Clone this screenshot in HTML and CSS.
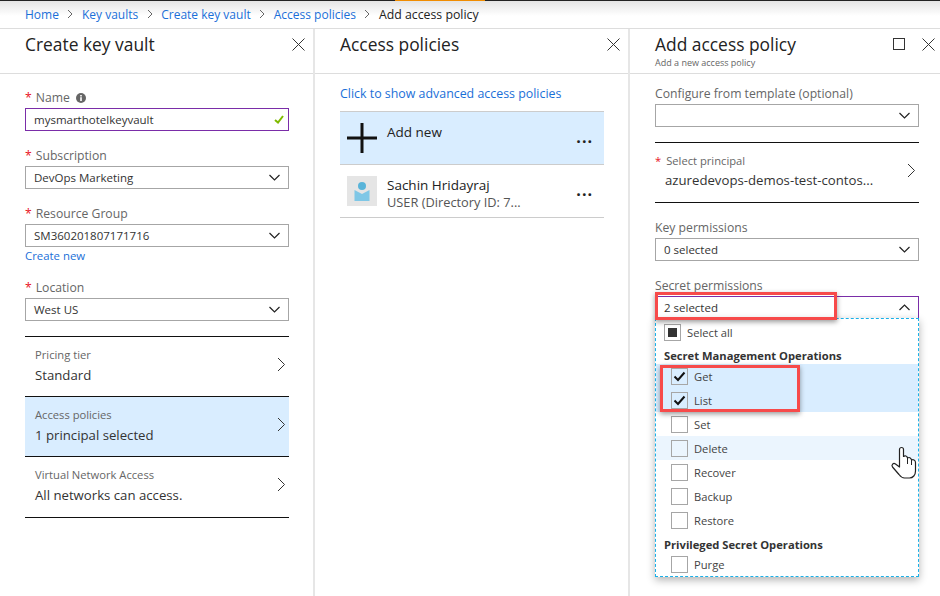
FILE: index.html
```html
<!DOCTYPE html>
<html lang="en">
<head>
    <meta charset="UTF-8">
    <title>Add access policy</title>
    <link rel="stylesheet" href="styles.css">
</head>
<body>
    <svg class="defs" width="0" height="0">
        <symbol id="close" viewBox="0 0 13 13"><path d="M.5.5l12 12M12.5.5l-12 12" fill="none" stroke="#333"/></symbol>
        <symbol id="down" viewBox="0 0 11 7"><path d="M.5 1l5 5 5-5" fill="none" stroke="#222" stroke-width="1.2"/></symbol>
        <symbol id="up" viewBox="0 0 11 7"><path d="M.5 6l5-5 5 5" fill="none" stroke="#222" stroke-width="1.2"/></symbol>
        <symbol id="right" viewBox="0 0 9 15"><path d="M1 1l6.500 6.500L1 14" fill="none" stroke="#333"/></symbol>
        <symbol id="crumb" viewBox="0 0 6 10"><path d="M1 1l4 4-4 4" fill="none" stroke="#666"/></symbol>
        <symbol id="tick" viewBox="0 0 13 11"><path d="M1.500 5.500l3.500 3.500 6.500-7.500" fill="none" stroke="#111" stroke-width="2"/></symbol>
    </svg>

    <div class="topline"><div class="topline-mark"></div></div>
    <nav class="crumbs">
        <a href="#">Home</a><svg class="crumb-sep"><use href="#crumb"/></svg>
        <a href="#">Key vaults</a><svg class="crumb-sep"><use href="#crumb"/></svg>
        <a href="#">Create key vault</a><svg class="crumb-sep"><use href="#crumb"/></svg>
        <a href="#">Access policies</a><svg class="crumb-sep"><use href="#crumb"/></svg>
        <span class="crumb-current">Add access policy</span>
    </nav>

    <main class="blades">
        <section class="blade">
            <header class="blade-head">
                <h2>Create key vault</h2>
                <svg class="icon-close"><use href="#close"/></svg>
            </header>
            <div class="blade-body">
                <div class="field">
                    <label><span class="star">*</span>Name
                        <svg class="info" viewBox="0 0 10 10"><circle cx="5" cy="5" r="5" fill="#666"/><rect x="4.200" y="4.200" width="1.600" height="3.800" fill="#fff"/><rect x="4.200" y="2" width="1.600" height="1.500" fill="#fff"/></svg>
                    </label>
                    <div class="select select-active">mysmarthotelkeyvault
                        <svg class="ok" viewBox="0 0 10 9"><path d="M1 5l3 2.500L9 1" fill="none" stroke="#7fba00" stroke-width="2"/></svg>
                    </div>
                </div>
                <div class="field">
                    <label><span class="star">*</span>Subscription</label>
                    <div class="select">DevOps Marketing<svg class="caret"><use href="#down"/></svg></div>
                </div>
                <div class="field field-tight">
                    <label><span class="star">*</span>Resource Group</label>
                    <div class="select">SM360201807171716<svg class="caret"><use href="#down"/></svg></div>
                    <a class="create" href="#">Create new</a>
                </div>
                <div class="field">
                    <label><span class="star">*</span>Location</label>
                    <div class="select">West US<svg class="caret"><use href="#down"/></svg></div>
                </div>
                <div class="rows">
                    <div class="row">
                        <div><div class="row-label">Pricing tier</div><div class="row-value">Standard</div></div>
                        <svg class="chev"><use href="#right"/></svg>
                    </div>
                    <div class="row row-selected">
                        <div><div class="row-label">Access policies</div><div class="row-value">1 principal selected</div></div>
                        <svg class="chev"><use href="#right"/></svg>
                    </div>
                    <div class="row row-tall">
                        <div><div class="row-label">Virtual Network Access</div><div class="row-value">All networks can access.</div></div>
                        <svg class="chev"><use href="#right"/></svg>
                    </div>
                </div>
            </div>
        </section>

        <section class="blade">
            <header class="blade-head">
                <h2>Access policies</h2>
                <svg class="icon-close"><use href="#close"/></svg>
            </header>
            <div class="blade-body">
                <a class="advanced" href="#">Click to show advanced access policies</a>
                <div class="policies">
                    <div class="policy policy-add">
                        <svg class="policy-icon" viewBox="0 0 30 30"><path d="M15 0v30M0 15h30" stroke="#111" stroke-width="3"/></svg>
                        <div class="policy-text"><div class="policy-name">Add new</div></div>
                        <span class="dots">...</span>
                    </div>
                    <div class="policy">
                        <svg class="policy-icon" viewBox="0 0 30 30">
                            <rect width="30" height="30" fill="#e5e5e5"/>
                            <circle cx="15" cy="10" r="4" fill="#59b4d9"/>
                            <path d="M7.500 14l7.500 4 7.500-4v11h-15z" fill="#7fc7e6"/>
                        </svg>
                        <div class="policy-text">
                            <div class="policy-name">Sachin Hridayraj</div>
                            <div class="policy-sub">USER (Directory ID: 7...</div>
                        </div>
                        <span class="dots">...</span>
                    </div>
                </div>
            </div>
        </section>

        <section class="blade blade-last">
            <header class="blade-head">
                <div>
                    <h2>Add access policy</h2>
                    <div class="blade-sub">Add a new access policy</div>
                </div>
                <div class="head-icons">
                    <div class="icon-max"></div>
                    <svg class="icon-close"><use href="#close"/></svg>
                </div>
            </header>
            <div class="blade-body">
                <div class="field field-template">
                    <label>Configure from template (optional)</label>
                    <div class="select"><svg class="caret"><use href="#down"/></svg></div>
                </div>
                <div class="row row-principal">
                    <div>
                        <div class="row-label"><span class="star">*</span>Select principal</div>
                        <div class="row-value">azuredevops-demos-test-contos...</div>
                    </div>
                    <svg class="chev"><use href="#right"/></svg>
                </div>
                <div class="field field-key">
                    <label>Key permissions</label>
                    <div class="select">0 selected<svg class="caret"><use href="#down"/></svg></div>
                </div>
                <div class="field field-secret">
                    <label>Secret permissions</label>
                    <div class="select select-active">2 selected<svg class="caret"><use href="#up"/></svg></div>
                    <div class="menu">
                        <div class="opt opt-all"><span class="box"><span class="box-fill"></span></span>Select all</div>
                        <div class="group">Secret Management Operations</div>
                        <div class="opt opt-on"><span class="box"><svg class="tick"><use href="#tick"/></svg></span>Get</div>
                        <div class="opt opt-on"><span class="box"><svg class="tick"><use href="#tick"/></svg></span>List</div>
                        <div class="opt"><span class="box"></span>Set</div>
                        <div class="opt opt-hover"><span class="box"></span>Delete</div>
                        <div class="opt"><span class="box"></span>Recover</div>
                        <div class="opt"><span class="box"></span>Backup</div>
                        <div class="opt"><span class="box"></span>Restore</div>
                        <div class="group group-second">Privileged Secret Operations</div>
                        <div class="opt"><span class="box"></span>Purge</div>
                    </div>
                </div>
            </div>
        </section>
    </main>

    <div class="callout callout-select"></div>
    <div class="callout callout-opts"></div>
    <svg class="hand" viewBox="0 0 28 36">
        <path d="M9.500 22V4.500a2 2 0 0 1 4 0V11.500c1.500-1 3.500-.8 4 1.500 1.500-1 3.500-.5 4 2 1.500-.8 4-.2 4 2.500V26c0 4-2.500 7-6 7h-5c-2.500 0-4-1.500-5.500-3.500L2.500 22c-1.500-2 .8-4.500 3-3z" fill="#fff" stroke="#222" stroke-width="1.200" stroke-linejoin="round"/>
        <path d="M17.500 13v6M21.500 15v5" fill="none" stroke="#222"/>
    </svg>
</body>
</html>
```

FILE: styles.css
```css
body {
    position: relative;
    width: 940px;
    height: 596px;
    margin: 0;
    overflow: hidden;
    background-color: #fff;
    color: #333;
    font-family: 'Open Sans', 'Noto Sans', sans-serif;
    font-size: 12px;
}

a {
    color: #1a6fd8;
    text-decoration: none;
}

.defs {
    position: absolute;
}

.topline {
    height: 1px;
    background-color: #222;
}

.topline-mark {
    width: 90px;
    height: 1px;
    margin-left: 395px;
    background-color: #f08c00;
}

.crumbs {
    display: flex;
    align-items: center;
    height: 28px;
    padding-left: 25px;
    padding-bottom: 1px;
    box-sizing: border-box;
    background: linear-gradient(#e4e4e4, #fff 55%);
    border-bottom: 1px solid #ddd;
    font-size: 12px;
}

.crumb-sep {
    width: 6px;
    height: 10px;
    margin: 0 8.500px;
}

.crumb-current {
    color: #222;
    font-size: 12.300px;
}

.blades {
    display: grid;
    grid-template-columns: 315px 315px 310px;
    height: 567px;
}

.blade {
    border-right: 2px solid #e6e6e6;
    box-sizing: border-box;
}

.blade-last {
    border-right: none;
}

.blade-head {
    display: flex;
    justify-content: space-between;
    height: 44px;
    padding: 0 8px 0 25px;
    border-bottom: 1px solid #ddd;
}

.blade-last .blade-head {
    padding-right: 5px;
}

.blade-head h2 {
    margin: 5px 0 0;
    color: #222;
    font-size: 17.400px;
    font-weight: 400;
    line-height: 20px;
}

.blade-sub {
    margin-top: 3px;
    color: #666;
    font-size: 9px;
    line-height: 12px;
}

.icon-close {
    width: 13px;
    height: 13px;
    margin-top: 9px;
}

.head-icons {
    display: flex;
    gap: 17px;
    align-items: flex-start;
}

.icon-max {
    width: 10px;
    height: 10px;
    margin-top: 9px;
    border: 1px solid #333;
}

.blade-body {
    position: relative;
    padding: 15px 24px 0 25px;
}

.blade-last .blade-body {
    padding: 11px 21px 0 25px;
}

.field {
    margin-bottom: 16px;
}

.field-tight {
    margin-bottom: 15px;
}

.field label {
    display: block;
    height: 16px;
    margin-bottom: 3px;
    color: #666;
    font-size: 12.200px;
    line-height: 18px;
}

.star {
    margin-right: 4px;
    color: #e81123;
}

.info {
    width: 10px;
    height: 10px;
    margin-left: 3px;
    vertical-align: -1px;
}

.select {
    position: relative;
    height: 23px;
    padding-left: 8px;
    box-sizing: border-box;
    border: 1px solid #a6a6a6;
    color: #333;
    font-size: 11.500px;
    line-height: 21px;
}

.select-active {
    border-color: #7a2da8;
}

.ok {
    position: absolute;
    top: 6px;
    right: 4px;
    width: 10px;
    height: 9px;
}

.caret {
    position: absolute;
    top: 7px;
    right: 8px;
    width: 11px;
    height: 7px;
}

.create {
    display: block;
    height: 16px;
    margin-top: 1px;
    font-size: 11.400px;
    line-height: 16px;
}

.rows {
    margin-top: -1px;
    border-top: 1px solid #111;
}

.row {
    display: flex;
    align-items: center;
    justify-content: space-between;
    height: 60px;
    padding: 0 3px 3px 10px;
    box-sizing: border-box;
    border-bottom: 1px solid #111;
}

.row-tall {
    height: 61px;
}

.row-selected {
    background-color: #d9edff;
}

.row-label {
    color: #666;
    font-size: 11.200px;
    line-height: 16px;
}

.row-value {
    margin-top: 4px;
    color: #333;
    font-size: 13.200px;
    line-height: 17px;
}

.chev {
    width: 9px;
    height: 15px;
    margin-top: -2px;
}

.advanced {
    display: block;
    height: 22px;
    font-size: 12.400px;
    line-height: 10px;
}

.policies {
    border-top: 1px solid #ccc;
}

.policy {
    position: relative;
    display: flex;
    gap: 10px;
    align-items: flex-start;
    height: 53px;
    padding: 11px 0 0 7px;
    box-sizing: border-box;
    border-bottom: 1px solid #ccc;
}

.policy-add {
    background-color: #d9edff;
}

.policy-icon {
    width: 30px;
    height: 30px;
    flex: none;
}

.policy-name {
    color: #222;
    font-size: 13.500px;
    line-height: 18px;
}

.policy-sub {
    color: #555;
    font-size: 12.800px;
    line-height: 17px;
}

.dots {
    position: absolute;
    top: 17px;
    right: 11px;
    color: #222;
    font-size: 16px;
    font-weight: 700;
    letter-spacing: 1px;
    line-height: 16px;
}

.field-template {
    margin-bottom: 15px;
}

.row-principal {
    height: 61px;
    padding: 0 3px 3px 0;
    border-top: 1px solid #111;
}

.row-principal .star {
    margin-right: 5px;
}

.row-principal .row-value {
    margin-top: 3px;
    margin-left: 10px;
}

.field-key {
    margin-top: 16px;
}

.field-secret {
    position: relative;
}

.menu {
    position: absolute;
    top: 41px;
    left: 0;
    width: 264px;
    height: 259px;
    padding-top: 1px;
    box-sizing: border-box;
    background-color: #fff;
    border: 1px dashed #1ab0e8;
    box-shadow: 0 3px 8px rgba(0, 0, 0, .3);
}

.opt {
    display: flex;
    gap: 6px;
    align-items: center;
    height: 24px;
    padding-left: 15px;
    color: #444;
    font-size: 11.200px;
}

.opt-all {
    padding-left: 8px;
}

.opt-on {
    background-color: #d9edff;
}

.opt-hover {
    background-color: #ebf5fe;
}

.box {
    display: flex;
    align-items: center;
    justify-content: center;
    width: 17px;
    height: 17px;
    flex: none;
    box-sizing: border-box;
    border: 1px solid #a6a6a6;
}

.box-fill {
    width: 9px;
    height: 9px;
    background-color: #333;
}

.tick {
    width: 13px;
    height: 11px;
}

.group {
    height: 20px;
    padding-left: 8px;
    color: #333;
    font-size: 11.200px;
    font-weight: 700;
    line-height: 24px;
}

.group-second {
    height: 20px;
    line-height: 26px;
}

.callout {
    position: absolute;
    box-sizing: border-box;
    border: 3px solid #f74a4a;
    box-shadow: 0 2px 5px rgba(0, 0, 0, .4);
}

.callout-select {
    top: 292px;
    left: 655px;
    width: 182px;
    height: 28px;
}

.callout-opts {
    top: 365px;
    left: 660px;
    width: 140px;
    height: 47px;
}

.hand {
    position: absolute;
    top: 445px;
    left: 890px;
    width: 28px;
    height: 36px;
}
```
